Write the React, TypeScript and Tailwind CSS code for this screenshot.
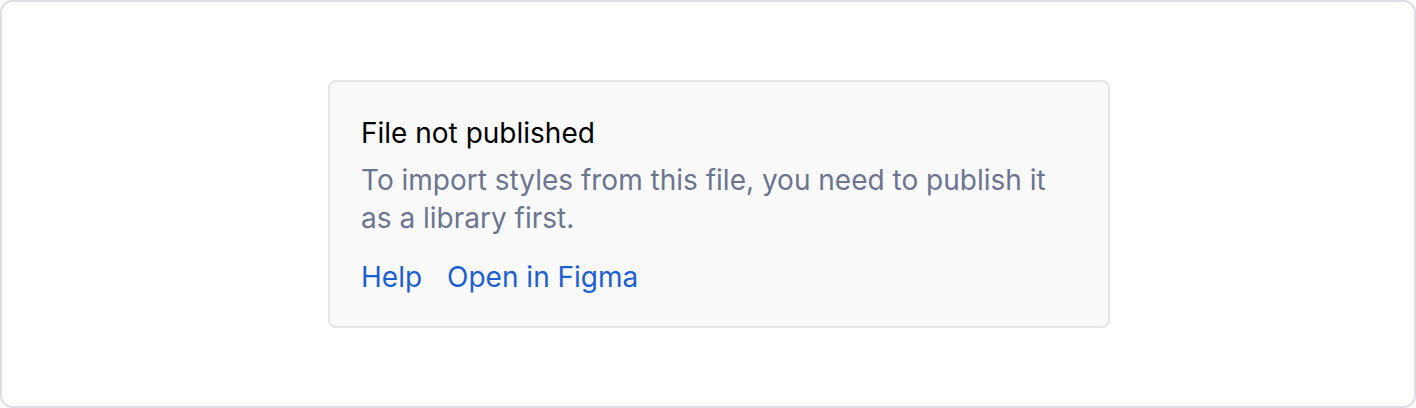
export default function App() {
  return (
    <div className="h-[408px] w-[1416px] bg-white font-['Inter',sans-serif]">
      <div className="flex h-full w-full items-start justify-center rounded-[12px] border-2 border-[#dfdfea] pt-[78px] pl-[22px]">
        <div className="w-[782px] rounded-[8px] border-2 border-[#e6e6e6] bg-[#fafafa] px-[31px] pt-[34px] pb-[32px]">
          <h2 className="text-[28px] leading-[34px] font-normal text-black">File not published</h2>
          <p className="mt-[11px] text-[28px] leading-[38px] text-[#6b7591]">
            To import styles from this file, you need to publish it
            <br />
            as a library first.
          </p>
          <div className="mt-[23px] flex gap-[25px] text-[28px] leading-[34px] font-normal text-[#1b5fd6]">
            <a href="#">Help</a>
            <a href="#">Open in Figma</a>
          </div>
        </div>
      </div>
    </div>
  );
}
